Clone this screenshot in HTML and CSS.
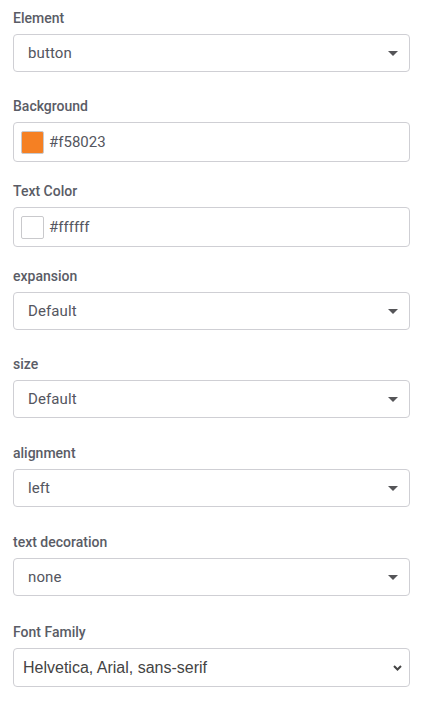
FILE: index.html
```html
<!DOCTYPE html>
<html>
<head>
<meta charset="utf-8">
<link rel="stylesheet" href="styles.css">
</head>
<body>
<div class="panel">
  <div class="field field-select">
    <div class="label">Element</div>
    <div class="select"><span class="value">button</span><svg class="caret" width="10" height="5" viewBox="0 0 10 5"><path d="M0 0h10L5 5z"/></svg></div>
  </div>
  <div class="field field-color">
    <div class="label">Background</div>
    <div class="color"><span class="swatch swatch-orange"></span><span class="value">#f58023</span></div>
  </div>
  <div class="field field-color">
    <div class="label">Text Color</div>
    <div class="color"><span class="swatch swatch-white"></span><span class="value">#ffffff</span></div>
  </div>
  <div class="field field-select">
    <div class="label">expansion</div>
    <div class="select"><span class="value">Default</span><svg class="caret" width="10" height="5" viewBox="0 0 10 5"><path d="M0 0h10L5 5z"/></svg></div>
  </div>
  <div class="field field-select field-wide">
    <div class="label">size</div>
    <div class="select"><span class="value">Default</span><svg class="caret" width="10" height="5" viewBox="0 0 10 5"><path d="M0 0h10L5 5z"/></svg></div>
  </div>
  <div class="field field-select field-wide">
    <div class="label">alignment</div>
    <div class="select"><span class="value">left</span><svg class="caret" width="10" height="5" viewBox="0 0 10 5"><path d="M0 0h10L5 5z"/></svg></div>
  </div>
  <div class="field field-select field-wider">
    <div class="label">text decoration</div>
    <div class="select"><span class="value">none</span><svg class="caret" width="10" height="5" viewBox="0 0 10 5"><path d="M0 0h10L5 5z"/></svg></div>
  </div>
  <div class="field">
    <div class="label">Font Family</div>
    <div class="native"><span class="value">Helvetica, Arial, sans-serif</span><svg class="chev" width="9" height="6" viewBox="0 0 9 6"><path d="M1 1l3.5 3.5L8 1" fill="none" stroke="#444" stroke-width="2"/></svg></div>
  </div>
</div>
</body>
</html>
```
FILE: styles.css
```css
html, body {
  margin: 0;
  padding: 0;
  background: #ffffff;
}
body {
  font-family: Roboto, "Noto Sans", sans-serif;
}
.panel {
  padding: 8px 14px 0 13px;
  display: flex;
  flex-direction: column;
}
.field {
  display: flex;
  flex-direction: column;
}
.field-select {
  margin-bottom: 24px;
}
.field-wide {
  margin-bottom: 25px;
}
.field-wider {
  margin-bottom: 26px;
}
.field-color {
  margin-bottom: 19px;
}
.label {
  font-size: 14px;
  font-weight: 500;
  line-height: 20px;
  color: #5a5c66;
  margin-bottom: 6px;
}
.select {
  height: 38px;
  box-sizing: border-box;
  border: 1px solid #cfcfd4;
  border-radius: 4px;
  display: flex;
  align-items: center;
  justify-content: space-between;
  padding: 0 11px 0 14px;
}
.select .value {
  font-size: 15px;
  color: #545660;
  letter-spacing: 0.1px;
}
.caret {
  fill: #555558;
}
.color {
  height: 40px;
  box-sizing: border-box;
  border: 1px solid #cfcfd4;
  border-radius: 4px;
  display: flex;
  align-items: center;
  padding: 0 7px;
  gap: 5px;
}
.swatch {
  width: 23px;
  height: 23px;
  box-sizing: border-box;
  border: 1px solid #c9c9cc;
  border-radius: 2px;
}
.swatch-orange {
  background: #f58023;
}
.swatch-white {
  background: #ffffff;
}
.color .value {
  font-size: 15px;
  color: #545660;
}
.native {
  height: 39px;
  box-sizing: border-box;
  border: 1px solid #cfcfd4;
  border-radius: 4px;
  display: flex;
  align-items: center;
  justify-content: space-between;
  padding: 0 7px 0 9px;
}
.native .value {
  font-family: "Liberation Sans", Arial, sans-serif;
  font-size: 16px;
  color: #444444;
}
```
